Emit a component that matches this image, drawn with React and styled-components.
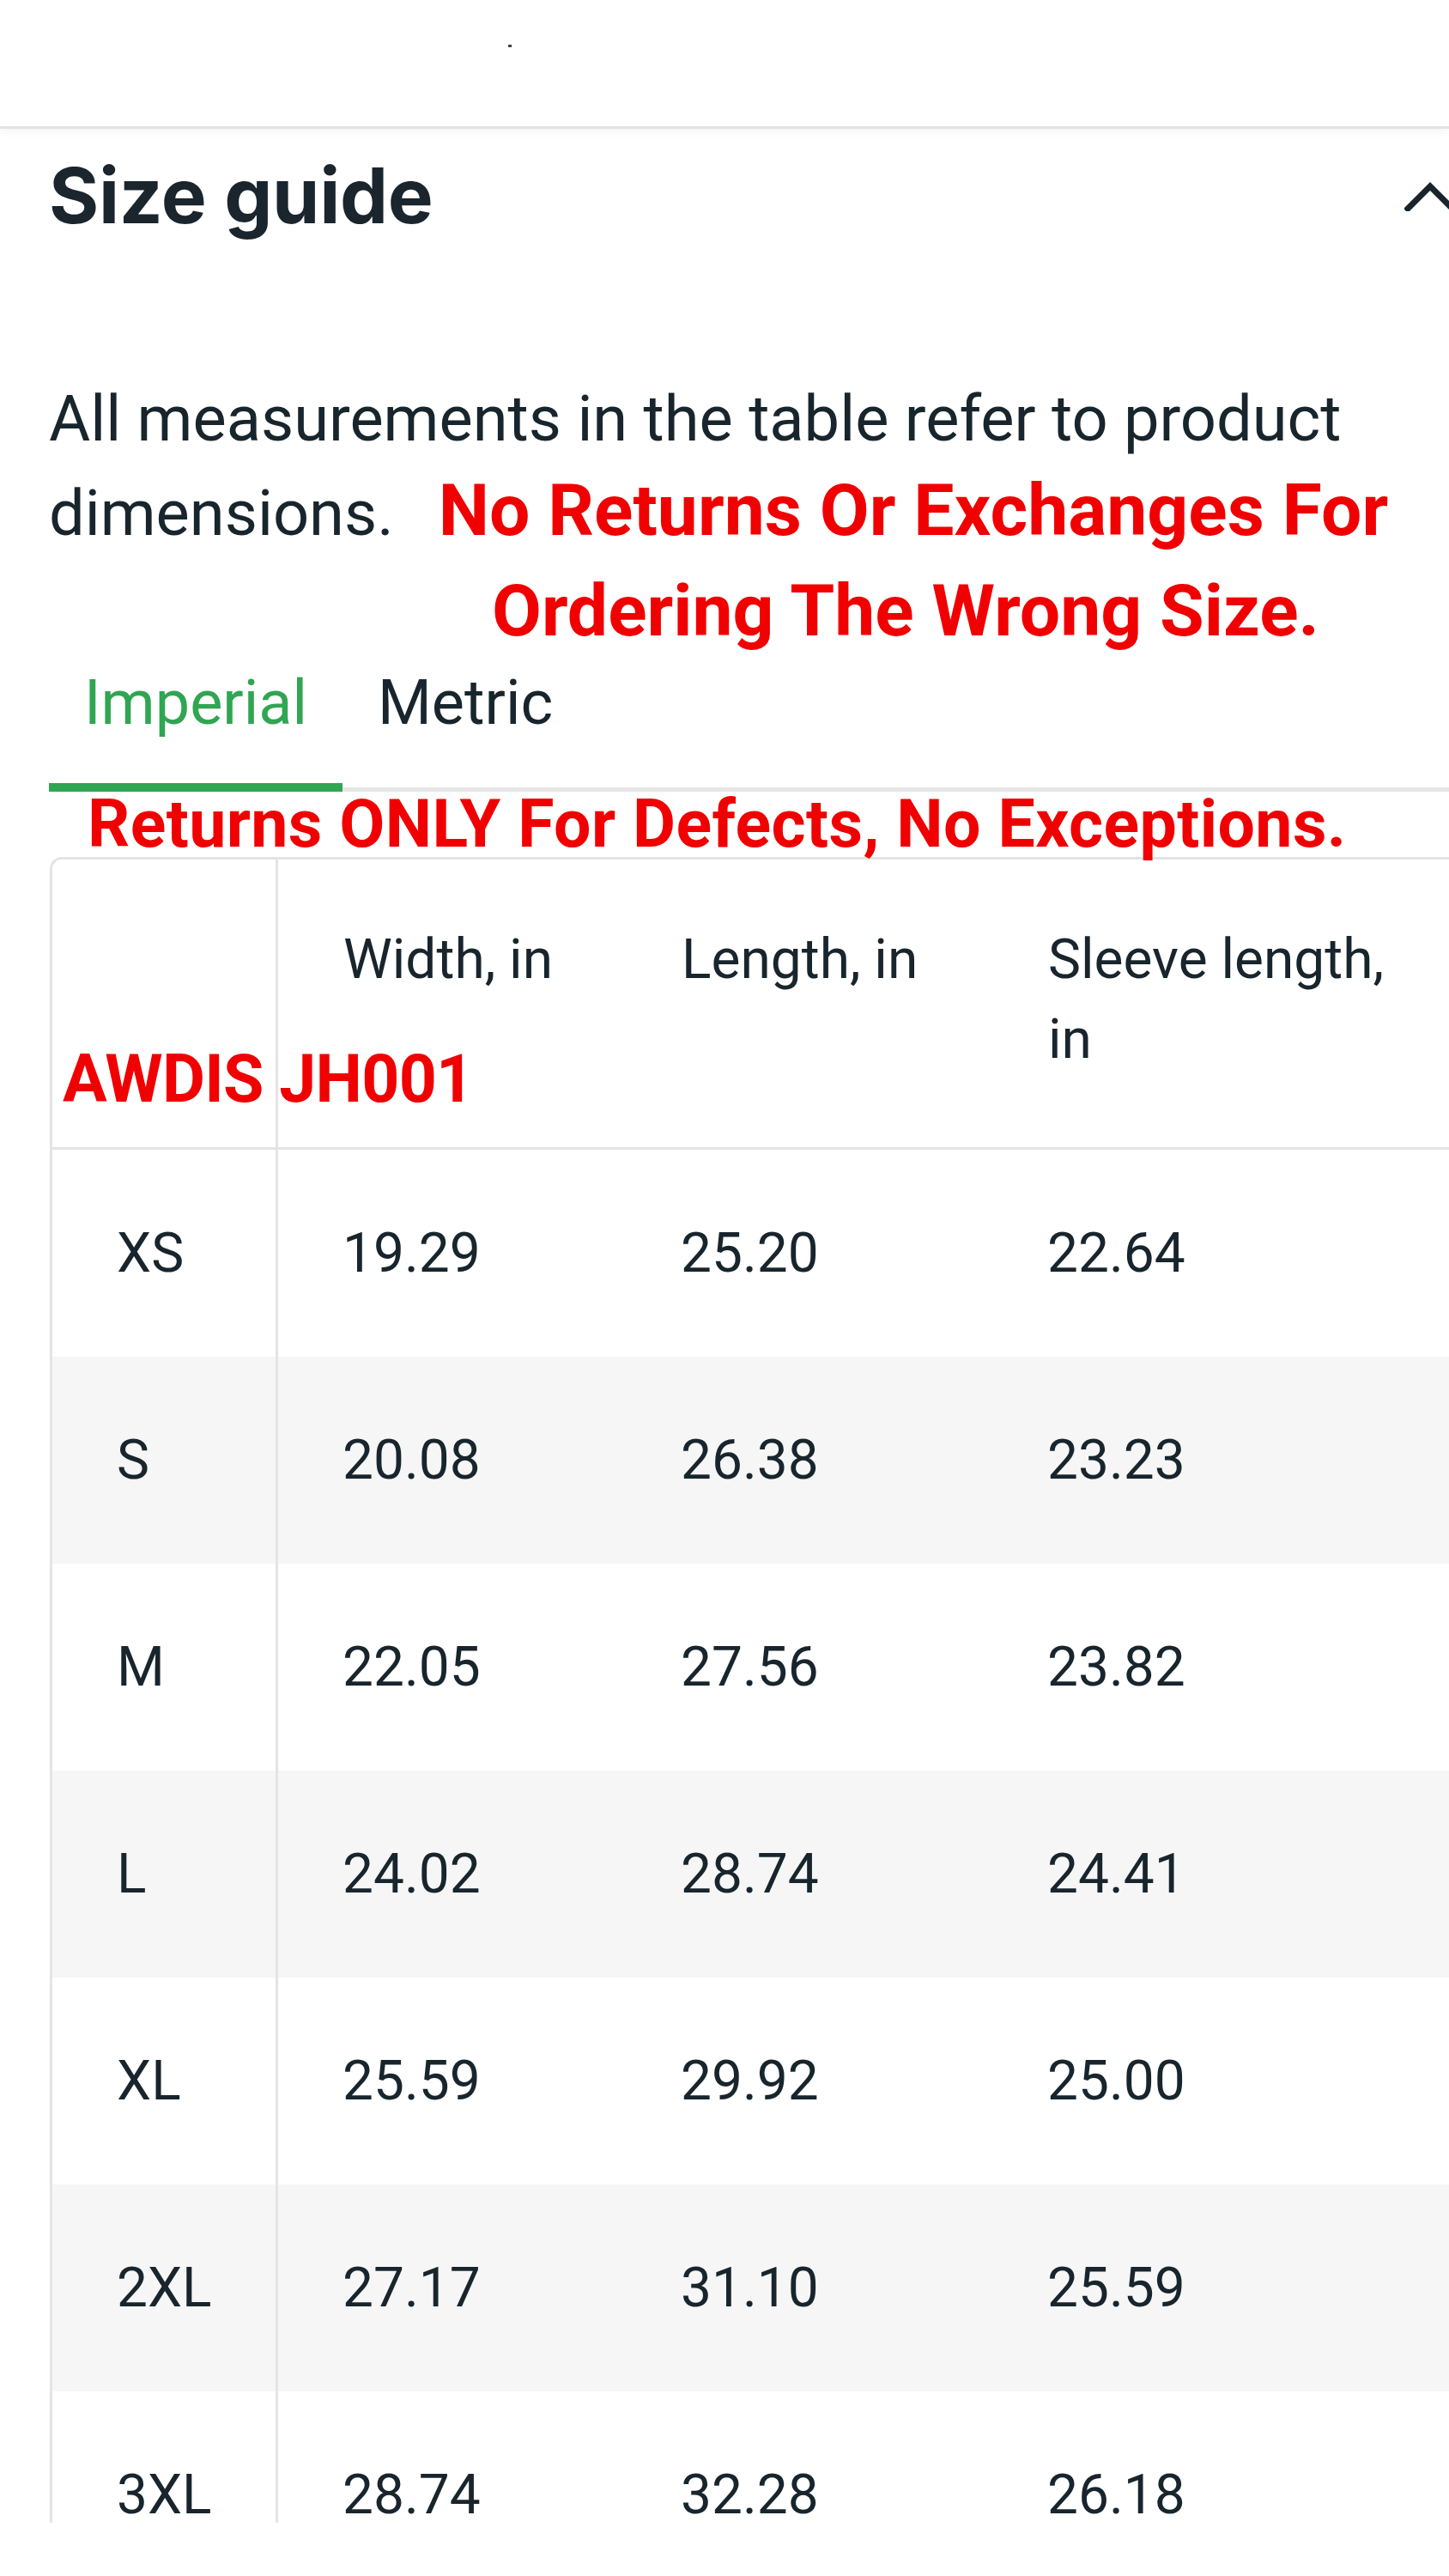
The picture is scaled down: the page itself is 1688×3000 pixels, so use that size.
import React from "react";
import styled, { createGlobalStyle } from "styled-components";

const GlobalStyle = createGlobalStyle`
  html, body {
    margin: 0;
    padding: 0;
    background: #fff;
  }
  body {
    overflow-x: hidden;
    font-family: Roboto, "Noto Sans", sans-serif;
    color: #18252d;
  }
`;

const sizes = [
  { size: "XS", width: "19.29", length: "25.20", sleeve: "22.64" },
  { size: "S", width: "20.08", length: "26.38", sleeve: "23.23" },
  { size: "M", width: "22.05", length: "27.56", sleeve: "23.82" },
  { size: "L", width: "24.02", length: "28.74", sleeve: "24.41" },
  { size: "XL", width: "25.59", length: "29.92", sleeve: "25.00" },
  { size: "2XL", width: "27.17", length: "31.10", sleeve: "25.59" },
  { size: "3XL", width: "28.74", length: "32.28", sleeve: "26.18" },
];

const Page = styled.div`
  width: 1688px;
  overflow: hidden;
`;

const TopBar = styled.div`
  box-sizing: border-box;
  height: 150px;
  padding: 52px 0 0 592px;
  border-bottom: 3px solid #e2e2e2;
  box-shadow: 0 4px 10px rgba(0, 0, 0, 0.04);
`;

const Tick = styled.span`
  display: block;
  width: 4px;
  height: 3px;
  background: #444;
`;

const Header = styled.div`
  display: flex;
  align-items: center;
  justify-content: space-between;
  padding: 25px 0 0 57px;
`;

const Title = styled.h2`
  margin: 0;
  font-family: Inter, Roboto, sans-serif;
  font-weight: 700;
  font-size: 89px;
  line-height: 106px;
  letter-spacing: -0.3px;
  color: #1a252d;
`;

const Chevron = styled.svg`
  width: 60px;
  height: 36px;
  margin-right: -8px;
  flex-shrink: 0;
`;

const Intro = styled.div`
  margin-top: 151px;
  padding-left: 57px;
  font-size: 74px;
  line-height: 111px;
`;

const NoticeRow = styled.div`
  display: flex;
  align-items: baseline;
  margin-top: -7px;
`;

const RedNotice = styled.div`
  margin-left: 52px;
  text-align: center;
  color: #f00000;
  font-weight: 700;
  font-size: 84px;
  line-height: 117px;
`;

const NoticeLine = styled.span`
  display: block;
  padding-right: ${(p) => (p.$shift ? "18px" : "0")};
`;

const TabBar = styled.div`
  display: flex;
  margin: 6px 0 0 57px;
  border-bottom: 5px solid #e6e6e6;
`;

const Tab = styled.div`
  padding: 0 41px 50px;
  margin-bottom: -5px;
  font-size: 72px;
  line-height: 86px;
  color: ${(p) => (p.$active ? "#30a552" : "#18252d")};
  border-bottom: 10px solid ${(p) => (p.$active ? "#30a552" : "transparent")};
`;

const ReturnsLine = styled.div`
  margin-left: 102px;
  color: #f00000;
  font-weight: 700;
  font-size: 77px;
  line-height: 76px;
  letter-spacing: 0.4px;
  white-space: nowrap;
`;

const TableClip = styled.div`
  height: 1940px;
  overflow: hidden;
  margin-left: 58px;
`;

const Table = styled.div`
  width: 1660px;
  border: 3px solid #e4e4e4;
  border-radius: 14px;
`;

const Row = styled.div`
  position: relative;
  display: grid;
  grid-template-columns: 263px 394px 427px 560px;
  align-items: ${(p) => (p.$head ? "stretch" : "center")};
  height: ${(p) => (p.$head ? "auto" : "241px")};
  background: ${(p) => (p.$shade ? "#f6f6f6" : "transparent")};
  border-bottom: ${(p) => (p.$head ? "3px solid #e4e4e4" : "none")};
`;

const Cell = styled.div`
  box-sizing: border-box;
  height: 100%;
  display: flex;
  align-items: ${(p) => (p.$head ? "flex-start" : "center")};
  padding: ${(p) => (p.$head ? "70px 0 79px 76px" : "0 0 0 75px")};
  padding-right: ${(p) => (p.$wrap ? "76px" : "8px")};
  font-size: 64px;
  line-height: 93px;
  border-right: ${(p) => (p.$first ? "3px solid #e4e4e4" : "none")};
`;

const ModelTag = styled.div`
  position: absolute;
  left: 12px;
  top: 218px;
  color: #f00000;
  font-weight: 700;
  font-size: 77px;
  line-height: 77px;
  letter-spacing: -0.7px;
  white-space: nowrap;
`;

export default function App() {
  return (
    <Page>
      <GlobalStyle />
      <TopBar>
        <Tick />
      </TopBar>

      <Header>
        <Title>Size guide</Title>
        <Chevron viewBox="0 0 60 36" fill="none">
          <polyline
            points="4,33 30,7 56,33"
            stroke="#18252d"
            strokeWidth="7"
            strokeLinecap="square"
          />
        </Chevron>
      </Header>

      <Intro>
        <div>All measurements in the table refer to product</div>
        <NoticeRow>
          <span>dimensions.</span>
          <RedNotice>
            <NoticeLine>No Returns Or Exchanges For</NoticeLine>
            <NoticeLine $shift>Ordering The Wrong Size.</NoticeLine>
          </RedNotice>
        </NoticeRow>
      </Intro>

      <TabBar>
        <Tab $active>Imperial</Tab>
        <Tab>Metric</Tab>
      </TabBar>

      <ReturnsLine>Returns ONLY For Defects, No Exceptions.</ReturnsLine>

      <TableClip>
        <Table>
          <Row $head>
            <Cell $head $first />
            <Cell $head>Width, in</Cell>
            <Cell $head>Length, in</Cell>
            <Cell $head $wrap>Sleeve length, in</Cell>
            <ModelTag>AWDIS JH001</ModelTag>
          </Row>
          {sizes.map((s, i) => (
            <Row key={s.size} $shade={i % 2 === 1}>
              <Cell $first>{s.size}</Cell>
              <Cell>{s.width}</Cell>
              <Cell>{s.length}</Cell>
              <Cell $wrap>{s.sleeve}</Cell>
            </Row>
          ))}
        </Table>
      </TableClip>
    </Page>
  );
}
